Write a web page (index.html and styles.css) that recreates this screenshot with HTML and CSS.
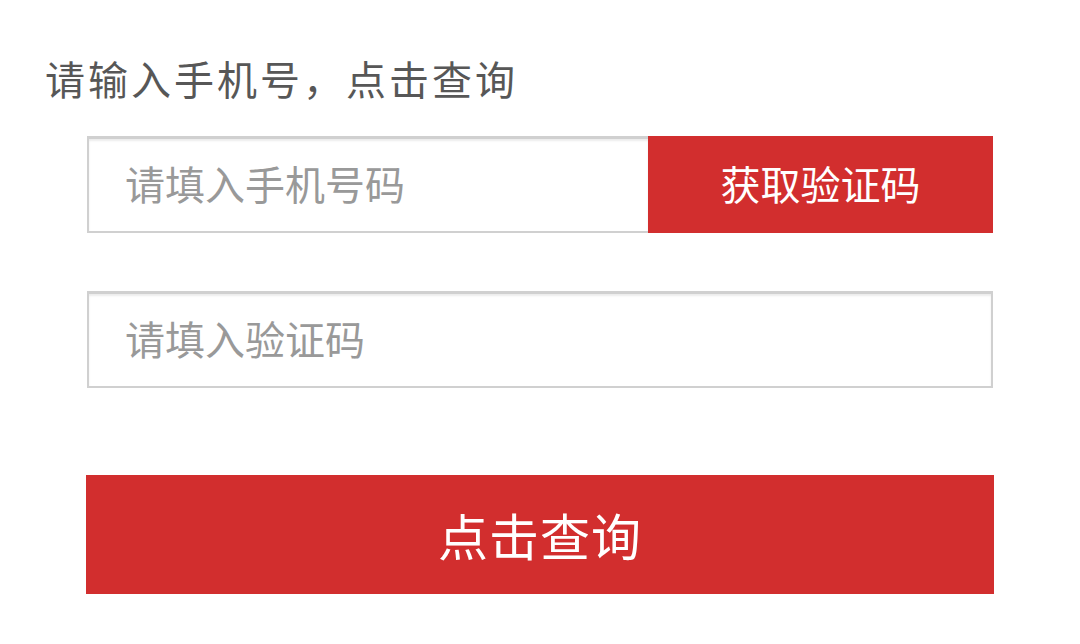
FILE: index.html
```html
<!DOCTYPE html>
<html lang="zh-CN">
<head>
<meta charset="utf-8">
<title>查询</title>
<link rel="stylesheet" href="styles.css">
</head>
<body>
<div class="page">
  <div class="title">请输入手机号，点击查询</div>
  <div class="form">
    <div class="row">
      <input class="field field-phone" type="text" placeholder="请填入手机号码">
      <button class="code-btn" type="button">获取验证码</button>
    </div>
    <div class="row row-code">
      <input class="field" type="text" placeholder="请填入验证码">
    </div>
    <button class="submit-btn" type="button">点击查询</button>
  </div>
</div>
</body>
</html>
```

FILE: styles.css
```css
* { box-sizing: border-box; }
html, body {
  margin: 0;
  padding: 0;
  background: #ffffff;
}
body {
  font-family: "Noto Sans CJK SC", "Noto Sans", sans-serif;
}
.page {
  width: 1080px;
  height: 644px;
  padding-top: 50px;
}
.title {
  padding-left: 45px;
  font-size: 40px;
  line-height: 56px;
  height: 56px;
  letter-spacing: 3px;
  color: #575757;
}
.form {
  margin-left: 87px;
  width: 906px;
  margin-top: 30px;
  display: flex;
  flex-direction: column;
}
.row {
  display: flex;
  height: 97px;
}
.row-code {
  margin-top: 58px;
}
.field {
  flex: 1;
  height: 97px;
  margin: 0;
  border: 2px solid #d0d0d0;
  border-top-width: 3px;
  box-shadow: inset 0 2px 2px rgba(0,0,0,0.08);
  background: #ffffff;
  padding: 0 0 4px 36px;
  font-family: inherit;
  font-size: 40px;
  color: #333333;
  outline: none;
  border-radius: 0;
}
.field::placeholder {
  color: #999999;
}
.field-phone {
  border-right: none;
}
.code-btn {
  width: 345px;
  height: 97px;
  margin: 0;
  border: none;
  background: #d22e2e;
  color: #ffffff;
  font-family: inherit;
  font-size: 40px;
  padding: 0 0 4px 0;
  border-radius: 0;
}
.submit-btn {
  margin-top: 87px;
  margin-left: -1px;
  width: 908px;
  height: 119px;
  border: none;
  background: #d22e2e;
  color: #ffffff;
  font-family: inherit;
  font-size: 50px;
  letter-spacing: 1px;
  padding: 0 0 2px 0;
  border-radius: 0;
}
```
